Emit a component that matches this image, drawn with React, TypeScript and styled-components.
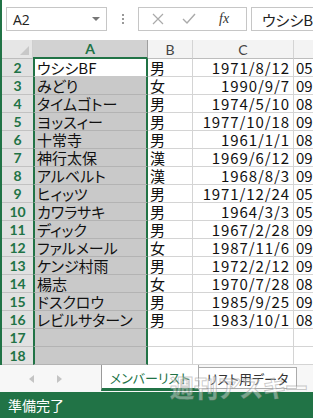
import React from 'react';
import styled, { createGlobalStyle } from 'styled-components';

const GREEN = '#217346';
const JP = '"Noto Sans CJK JP", "Noto Sans", sans-serif';

const Global = createGlobalStyle`
    html, body {
        margin: 0;
        padding: 0;
        width: 313px;
        height: 418px;
        overflow: hidden;
        background: #ffffff;
    }
`;

const Window = styled.div`
    position: relative;
    width: 313px;
    height: 418px;
    display: flex;
    flex-direction: column;
    overflow: hidden;
    font-family: ${JP};
    font-feature-settings: 'palt';
`;

const Main = styled.div`
    display: flex;
    flex-direction: column;
    border-left: 2px solid ${GREEN};
`;

const FormulaBar = styled.div`
    height: 40px;
    display: flex;
    align-items: flex-start;
    padding: 7px 0 0 4px;
    box-sizing: border-box;
    white-space: nowrap;
    & > * {
        flex-shrink: 0;
    }
`;

const NameBox = styled.div`
    width: 101px;
    height: 24px;
    box-sizing: border-box;
    border: 1px solid #c6c6c6;
    display: flex;
    align-items: center;
    justify-content: space-between;
    padding: 0 6px 0 6px;
    font-family: 'Open Sans', sans-serif;
    font-size: 14px;
    color: #222;
`;

const DropArrow = styled.span`
    width: 0;
    height: 0;
    border-left: 4px solid transparent;
    border-right: 4px solid transparent;
    border-top: 4px solid #777;
`;

const Dots = styled.div`
    width: 31px;
    height: 24px;
    display: flex;
    flex-direction: column;
    align-items: center;
    justify-content: center;
    gap: 2px;
    span {
        width: 2px;
        height: 2px;
        background: #999;
    }
`;

const FxBox = styled.div`
    width: 109px;
    height: 24px;
    box-sizing: border-box;
    border: 1px solid #c6c6c6;
    display: flex;
    align-items: center;
    padding-left: 13px;
    gap: 18px;
`;

const FxLabel = styled.span`
    font-family: 'Liberation Serif', serif;
    font-style: italic;
    font-size: 14px;
    color: #333;
    margin-left: 5px;
`;

const ContentBox = styled.div`
    margin-left: 4px;
    width: 200px;
    height: 24px;
    box-sizing: border-box;
    border: 1px solid #c6c6c6;
    display: flex;
    align-items: center;
    padding-left: 10px;
    font-size: 15px;
    color: #222;
`;

const Sheet = styled.div`
    display: grid;
    grid-template-columns: 31px 115px 45px 101px 120px;
    grid-auto-rows: 18px;
    grid-template-rows: 19px;
    width: 412px;
`;

const Corner = styled.div`
    background: #e6e6e6;
    border-right: 1px solid #cfcfcf;
    border-bottom: 1px solid #bdbdbd;
    box-sizing: border-box;
    position: relative;
    &::after {
        content: '';
        position: absolute;
        right: 3px;
        bottom: 3px;
        border-left: 9px solid transparent;
        border-bottom: 9px solid #c8c8c8;
    }
`;

const ColHead = styled.div<{ $active?: boolean }>`
    box-sizing: border-box;
    display: flex;
    align-items: center;
    justify-content: center;
    font-family: Lato, 'Liberation Sans', sans-serif;
    font-size: 14px;
    background: ${(p) => (p.$active ? '#d2d2d2' : '#f3f3f3')};
    color: ${(p) => (p.$active ? GREEN : '#444')};
    font-weight: ${(p) => (p.$active ? 700 : 400)};
    border-right: 1px solid ${(p) => (p.$active ? '#9e9e9e' : '#d4d4d4')};
    border-bottom: ${(p) => (p.$active ? `2px solid ${GREEN}` : '1px solid #bdbdbd')};
`;

const RowHead = styled.div`
    box-sizing: border-box;
    display: flex;
    align-items: center;
    justify-content: center;
    background: #e1e1e1;
    color: ${GREEN};
    font-family: Lato, 'Liberation Sans', sans-serif;
    font-weight: 700;
    font-size: 14px;
    border-bottom: 1px solid #c2c2c2;
`;

const SelCell = styled.div<{ $active?: boolean }>`
    box-sizing: border-box;
    background: ${(p) => (p.$active ? '#ffffff' : '#c9c9c9')};
    border-left: 2px solid ${GREEN};
    border-right: 2px solid ${GREEN};
    border-bottom: 1px solid ${(p) => (p.$active ? '#c9c9c9' : '#b3b3b3')};
    padding-left: 2px;
    font-size: 15px;
    line-height: 17px;
    color: #111;
    white-space: nowrap;
    overflow: hidden;
`;

const Cell = styled.div<{ $align?: 'left' | 'right' }>`
    box-sizing: border-box;
    border-right: 1px solid #d4d4d4;
    border-bottom: 1px solid #d4d4d4;
    padding: 0 3px 0 2px;
    font-size: 15px;
    line-height: 17px;
    color: #111;
    text-align: ${(p) => p.$align || 'left'};
    white-space: nowrap;
    overflow: hidden;
`;

const DateCell = styled(Cell)`
    letter-spacing: 0.9px;
`;

const TabBar = styled.div`
    height: 27px;
    display: flex;
    align-items: stretch;
    background: #f7f7f7;
    box-sizing: border-box;
    & > * {
        flex-shrink: 0;
    }
`;

const NavArrows = styled.div`
    width: 101px;
    display: flex;
    align-items: center;
    padding-left: 29px;
    gap: 23px;
    box-sizing: border-box;
`;

const Arrow = styled.span<{ $dir: 'left' | 'right' }>`
    width: 0;
    height: 0;
    border-top: 4px solid transparent;
    border-bottom: 4px solid transparent;
    ${(p) => (p.$dir === 'left' ? 'border-right: 5px solid #c4c4c4;' : 'border-left: 5px solid #c4c4c4;')}
`;

const Tab = styled.div<{ $active?: boolean }>`
    width: 98px;
    box-sizing: border-box;
    display: flex;
    align-items: center;
    justify-content: center;
    font-size: 13px;
    color: ${(p) => (p.$active ? GREEN : '#333')};
    background: #ffffff;
    border-left: 1px solid ${(p) => (p.$active ? '#9a9a9a' : '#ababab')};
    border-right: 1px solid #ababab;
    ${(p) =>
        p.$active
            ? `border-bottom: 3px solid ${GREEN}; padding-top: 1px; margin-bottom: 1px;`
            : 'border-top: 1px solid #ababab; border-bottom: 1px solid #ababab; margin: 2px 0 3px; border-left: none;'}
`;

const StatusBar = styled.div`
    height: 26px;
    background: ${GREEN};
    color: #ffffff;
    font-size: 14px;
    display: flex;
    align-items: center;
    padding-left: 8px;
`;

const Watermark = styled.div`
    position: absolute;
    left: 170px;
    top: 369px;
    font-size: 24px;
    font-weight: 700;
    color: rgba(255, 255, 255, 0.4);
    -webkit-text-stroke: 1px rgba(140, 140, 140, 0.45);
    pointer-events: none;
`;

const rows = [
    { name: 'ウシシBF', sex: '男', date: '1971/8/12', tel: '050-3321-8842' },
    { name: 'みどり', sex: '女', date: '1990/9/7', tel: '090-5512-2231' },
    { name: 'タイムゴトー', sex: '男', date: '1974/5/10', tel: '080-2214-9931' },
    { name: 'ヨッスィー', sex: '男', date: '1977/10/18', tel: '090-8812-3344' },
    { name: '十常寺', sex: '男', date: '1961/1/1', tel: '080-1122-3344' },
    { name: '神行太保', sex: '漢', date: '1969/6/12', tel: '090-4432-1120' },
    { name: 'アルベルト', sex: '漢', date: '1968/8/3', tel: '090-7781-5521' },
    { name: 'ヒィッツ', sex: '男', date: '1971/12/24', tel: '050-6612-7788' },
    { name: 'カワラサキ', sex: '男', date: '1964/3/3', tel: '050-2231-4455' },
    { name: 'ディック', sex: '男', date: '1967/2/28', tel: '090-3345-6677' },
    { name: 'ファルメール', sex: '女', date: '1987/11/6', tel: '090-9981-2210' },
    { name: 'ケンジ村雨', sex: '男', date: '1972/2/12', tel: '090-1234-8876' },
    { name: '楊志', sex: '女', date: '1970/7/28', tel: '080-5567-3321' },
    { name: 'ドスクロウ', sex: '男', date: '1985/9/25', tel: '090-6654-1198' },
    { name: 'レビルサターン', sex: '男', date: '1983/10/1', tel: '080-4412-7765' },
    { name: '', sex: '', date: '', tel: '' },
    { name: '', sex: '', date: '', tel: '' },
];

export default function App() {
    return (
        <Window>
            <Global />
            <Main>
                <FormulaBar>
                    <NameBox>
                        A2
                        <DropArrow />
                    </NameBox>
                    <Dots>
                        <span />
                        <span />
                        <span />
                    </Dots>
                    <FxBox>
                        <svg width="12" height="12" viewBox="0 0 12 12">
                            <path d="M1 1 L11 11 M11 1 L1 11" stroke="#aaa" strokeWidth="1.2" fill="none" />
                        </svg>
                        <svg width="14" height="12" viewBox="0 0 14 12">
                            <path d="M1 6 L5 10 L13 1" stroke="#aaa" strokeWidth="1.4" fill="none" />
                        </svg>
                        <FxLabel>fx</FxLabel>
                    </FxBox>
                    <ContentBox>ウシシBF</ContentBox>
                </FormulaBar>
                <Sheet>
                    <Corner />
                    <ColHead $active>A</ColHead>
                    <ColHead>B</ColHead>
                    <ColHead>C</ColHead>
                    <ColHead>D</ColHead>
                    {rows.map((r, i) => (
                        <React.Fragment key={i}>
                            <RowHead>{i + 2}</RowHead>
                            <SelCell $active={i === 0}>{r.name}</SelCell>
                            <Cell>{r.sex}</Cell>
                            <DateCell $align="right">{r.date}</DateCell>
                            <Cell>{r.tel}</Cell>
                        </React.Fragment>
                    ))}
                </Sheet>
            </Main>
            <TabBar>
                <NavArrows>
                    <Arrow $dir="left" />
                    <Arrow $dir="right" />
                </NavArrows>
                <Tab $active>メンバーリスト</Tab>
                <Tab>リスト用データ</Tab>
            </TabBar>
            <StatusBar>準備完了</StatusBar>
            <Watermark>週刊アスキー</Watermark>
        </Window>
    );
}
